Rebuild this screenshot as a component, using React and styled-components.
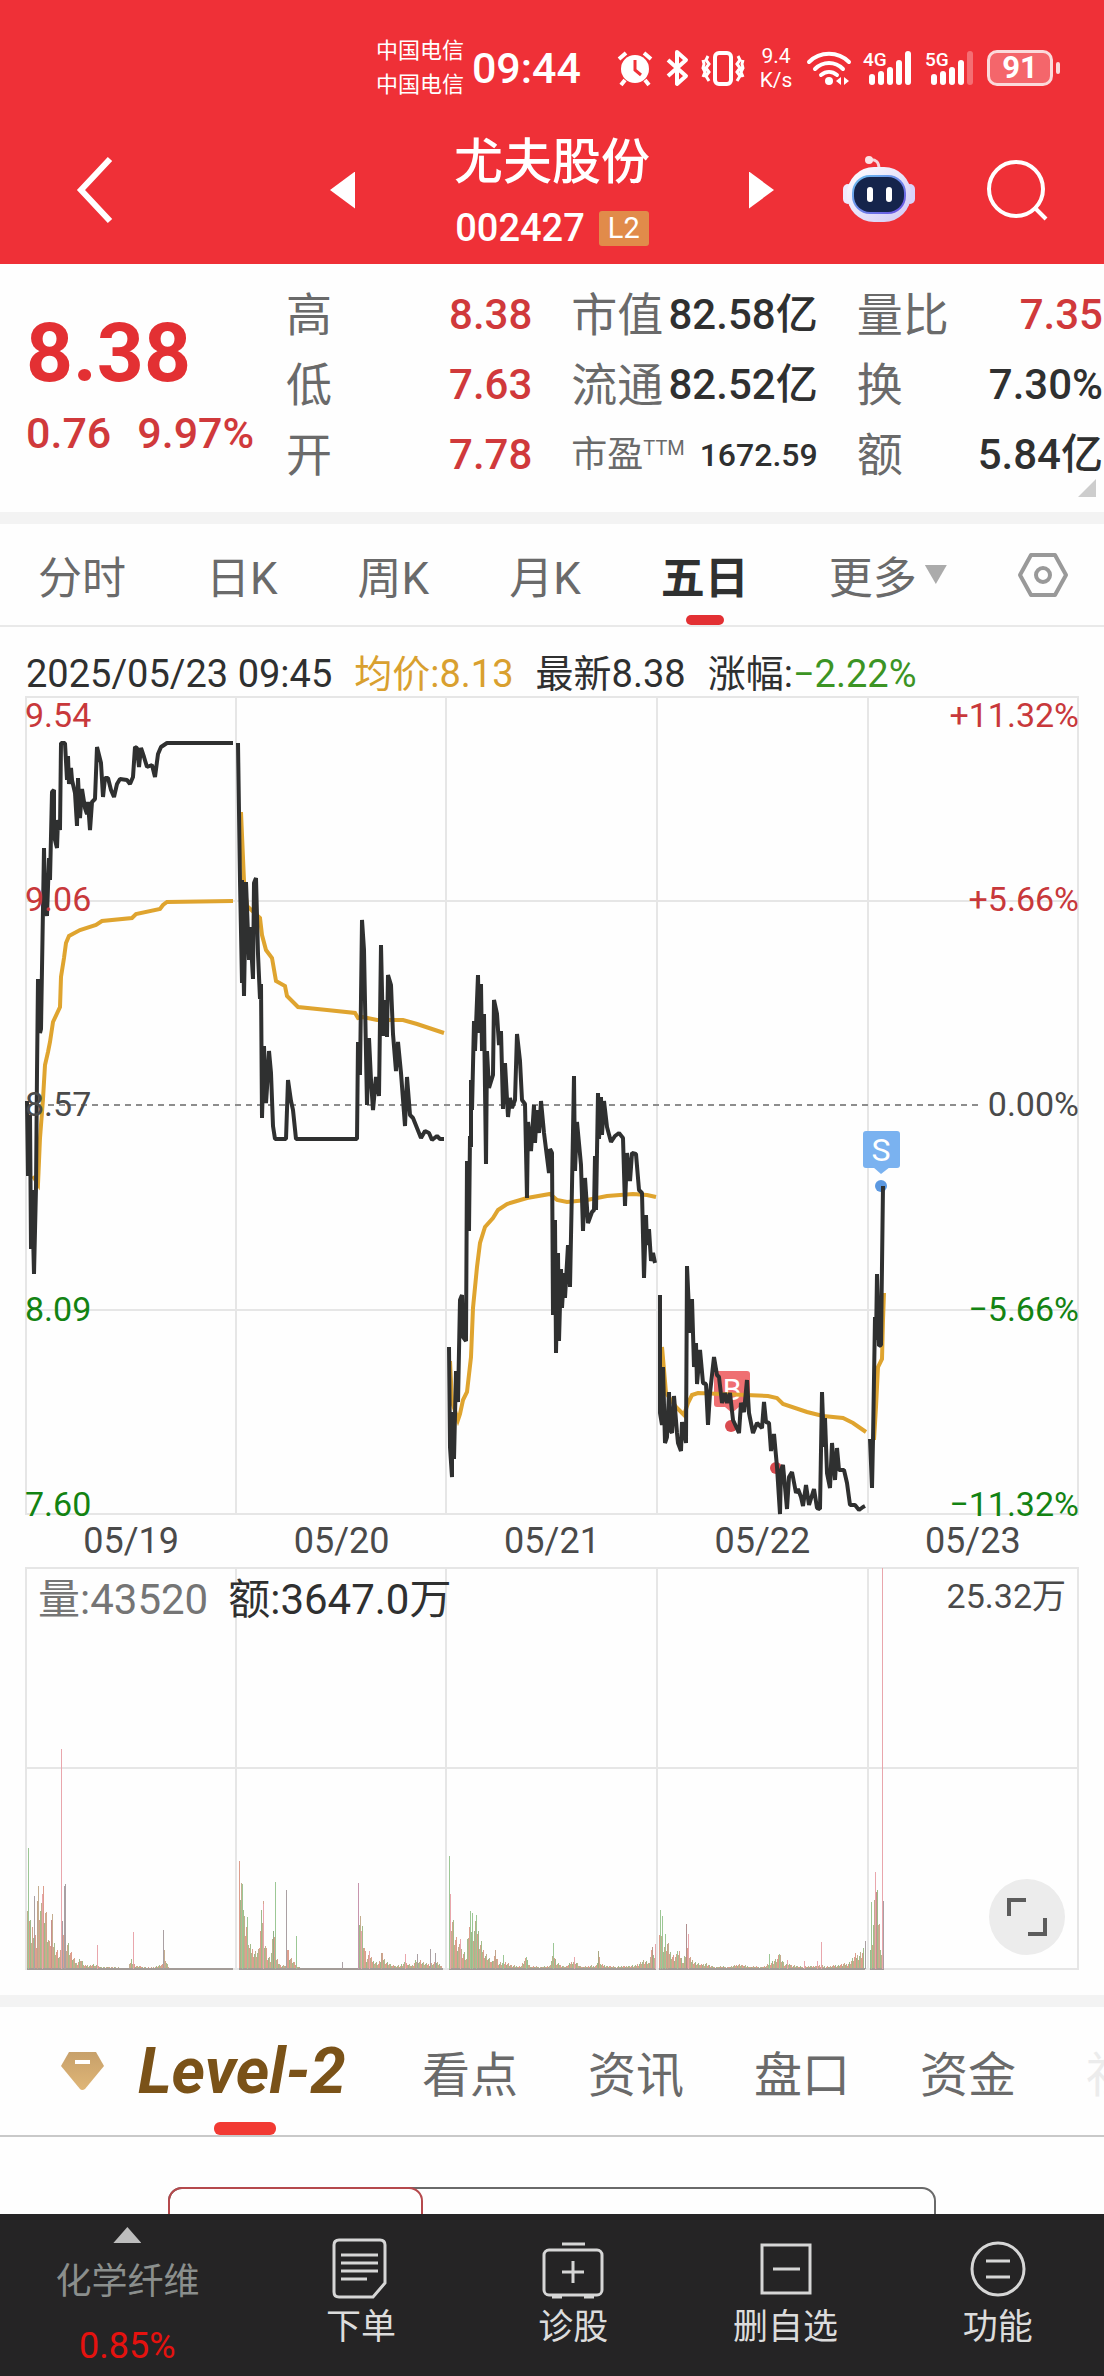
import { Fragment } from "react";
import styled, { createGlobalStyle } from "styled-components";

const GlobalStyle = createGlobalStyle`
  * {
    box-sizing: border-box;
  }
  body {
    margin: 0;
    background: #fefefe;
    color: #2f3030;
    font-family: Roboto, "Noto Sans CJK SC", sans-serif;
  }
  button {
    border: 0;
    padding: 0;
    background: none;
    color: inherit;
    font: inherit;
    white-space: nowrap;
    cursor: pointer;
  }
  svg {
    display: block;
    flex: none;
    overflow: visible;
  }
`;

/* ---------- data ---------- */

const stats = [
  [
    { label: "高", value: "8.38", up: true },
    { label: "低", value: "7.63", up: true },
    { label: "开", value: "7.78", up: true },
  ],
  [
    { label: "市值", value: "82.58亿" },
    { label: "流通", value: "82.52亿" },
    { label: "市盈", sup: "TTM", value: "1672.59", small: true },
  ],
  [
    { label: "量比", value: "7.35", up: true },
    { label: "换", value: "7.30%" },
    { label: "额", value: "5.84亿" },
  ],
];

const periods = ["分时", "日K", "周K", "月K", "五日"];
const days = ["05/19", "05/20", "05/21", "05/22", "05/23"];
const infoTabs = ["看点", "资讯", "盘口", "资金"];

// one polyline per trading day
const priceLines = [
  "27,411 28,486 30,425 31,559 32,500 34,584 36,498 37,383 38,289 40,343 41,339 44,158 45,214 47,226 49,168 50,190 52,102 54,100 54,146 57,158 58,130 60,140 61,53 65,53 67,90 68,66 69,94 71,78 72,90 75,103 77,136 78,88 80,128 82,99 85,118 87,124 88,112 90,140 92,112 95,109 97,57 101,73 103,107 105,88 108,88 111,100 114,107 117,94 120,89 127,90 130,94 133,87 135,57 137,58 139,77 141,58 144,67 147,77 152,75 155,87 158,64 161,57 164,55 167,53 233,53",
  "238,53 240,191 242,293 242,190 244,306 246,192 249,270 250,237 253,289 254,193 256,188 258,264 260,309 261,294 262,428 264,356 266,413 267,398 269,361 271,383 273,436 275,449 286,449 288,390 291,411 293,420 296,449 357,449 358,352 360,385 362,230 364,260 367,415 369,348 371,390 373,420 376,387 379,406 381,255 383,346 385,310 387,347 388,285 391,295 393,344 396,381 398,352 401,383 405,436 407,387 410,425 413,428 417,438 421,448 425,441 429,443 432,450 437,446 440,449 444,449",
  "449,657 450,757 452,787 452,722 454,769 456,681 458,712 460,610 462,605 463,647 466,651 467,471 469,541 470,446 471,457 471,390 472,420 474,331 475,361 478,285 479,343 481,294 482,361 484,324 486,474 487,361 489,398 493,385 494,310 497,324 499,355 501,341 503,419 505,373 508,427 510,408 512,418 515,410 517,344 520,371 522,410 525,414 527,508 528,432 531,461 534,415 535,453 537,420 539,443 541,411 544,443 549,483 550,459 552,463 553,625 555,530 556,663 558,563 559,651 561,579 562,618 564,583 565,608 568,555 570,597 572,496 574,386 575,481 577,432 581,475 583,541 585,488 588,533 592,522 594,520 595,466 596,520 598,403 599,449 601,407 602,445 604,411 607,437 611,452 615,446 619,443 623,448 625,516 627,463 630,491 632,463 636,464 639,500 642,503 644,588 646,525 647,555 649,539 651,571 653,563 655,573",
  "660,605 660,723 662,735 663,677 665,753 667,747 669,702 670,740 672,743 674,706 677,743 678,753 681,761 682,732 686,753 687,576 690,643 692,609 694,677 696,653 697,694 700,660 703,693 706,694 708,735 710,703 714,667 717,685 719,687 722,713 725,703 727,713 730,703 733,730 739,743 741,713 744,722 747,690 749,723 753,743 757,733 762,738 764,712 766,732 769,733 771,761 774,744 777,777 780,824 781,780 783,775 787,819 789,787 792,782 796,803 798,799 801,807 803,816 806,795 809,815 814,799 817,818 820,819 822,702 824,757 825,728 827,783 830,798 832,753 835,790 837,758 839,780 844,780 847,793 850,815 855,815 859,820 863,817 865,816",
  "870,749 872,798 873,750 875,627 876,650 877,584 879,656 881,655 883,496",
];

const averageLines = [
  "33,486 38,494 40,448 43,409 45,375 48,362 50,352 53,332 60,317 61,287 64,268 66,253 69,246 80,240 96,235 102,231 132,228 136,224 160,219 163,215 167,212 233,211",
  "241,122 244,191 247,216 260,228 262,245 266,260 272,268 276,291 285,296 287,306 298,317 327,320 355,323 358,328 363,327 377,330 403,330 417,334 444,343",
  "450,671 452,712 458,730 460,724 463,710 467,702 471,667 473,618 477,577 480,553 485,537 493,528 498,520 507,514 527,508 550,504 557,510 567,512 587,510 607,506 633,504 647,505 656,507",
  "662,657 666,703 676,717 684,725 688,713 692,705 698,703 768,706 777,708 783,714 807,722 823,726 843,728 853,733 866,742",
  "874,750 876,717 878,677 882,669 883,630 884,603",
];

const priceLabels = [
  { y: 37, price: "9.54", pct: "+11.32%", fill: "#c8383b" },
  { y: 221, price: "9.06", pct: "+5.66%", fill: "#c8383b" },
  { y: 426, price: "8.57", pct: "0.00%", fill: "#4a4a4a" },
  { y: 631, price: "8.09", pct: "−5.66%", fill: "#138313" },
  { y: 826, price: "7.60", pct: "−11.32%", fill: "#138313" },
];

// [x, height] outline of the minute volumes
const volumeShape = [
  [[27, 46], [29, 45], [31, 30], [33, 45], [34, 30], [36, 28], [38, 66], [40, 55], [42, 45], [43, 74], [45, 60], [47, 36], [49, 22], [52, 42], [53, 25], [56, 18], [59, 12], [63, 26], [67, 26], [69, 18], [72, 11], [76, 5], [80, 10], [84, 3], [92, 4], [100, 2], [128, 1], [131, 9], [135, 3], [150, 1], [158, 3], [162, 4], [164, 17], [166, 6], [169, 1], [232, 1]],
  [[239, 82], [241, 76], [242, 80], [244, 45], [247, 40], [249, 20], [252, 18], [255, 15], [258, 16], [261, 45], [263, 60], [264, 30], [267, 12], [270, 8], [273, 30], [274, 28], [276, 10], [280, 3], [285, 3], [286, 25], [289, 12], [292, 7], [296, 4], [300, 1], [357, 1], [359, 41], [362, 38], [364, 22], [366, 9], [369, 12], [372, 8], [378, 5], [382, 12], [386, 6], [392, 3], [400, 3], [405, 6], [412, 3], [417, 9], [422, 6], [428, 4], [436, 6], [442, 3]],
  [[449, 66], [452, 50], [454, 32], [457, 22], [460, 18], [463, 16], [466, 10], [468, 38], [471, 42], [476, 40], [479, 25], [483, 17], [488, 10], [492, 6], [495, 14], [498, 5], [505, 6], [512, 3], [520, 2], [526, 10], [530, 2], [545, 2], [549, 3], [553, 14], [556, 5], [565, 2], [574, 8], [580, 2], [596, 3], [598, 12], [601, 4], [612, 2], [635, 3], [643, 7], [648, 5], [652, 20], [655, 3]],
  [[659, 30], [661, 35], [663, 22], [667, 22], [670, 15], [674, 11], [679, 14], [683, 6], [686, 20], [689, 10], [693, 7], [700, 4], [706, 5], [712, 2], [730, 2], [738, 4], [750, 2], [765, 2], [769, 5], [775, 8], [780, 12], [784, 4], [790, 4], [800, 2], [820, 3], [826, 2], [840, 4], [848, 5], [855, 12], [860, 14], [863, 17], [864, 8]],
  [[870, 20], [872, 32], [874, 55], [875, 77], [877, 60], [879, 40], [881, 15], [883, 25]],
];

const RED = "#e9a6ac";
const GREEN = "#9cc795";
const GREY = "#aaa0a3";

const volumeSpikes = [
  [28, 121, GREEN], [34, 73, GREY], [37, 68, "#c3a48c"], [42, 75, RED], [51, 49, "#c98f8c"], [61, 220, RED], [62, 48, GREY], [64, 83, GREY], [65, 85, GREY],
  [97, 24, RED], [133, 37, RED], [163, 39, GREY],
  [242, 85, GREEN], [247, 52, GREEN], [263, 65, RED], [273, 38, "#8fb088"], [275, 87, GREEN], [286, 79, GREY], [296, 33, GREEN], [342, 7, GREY],
  [358, 86, "#c795ae"], [361, 38, RED], [369, 18, RED], [381, 16, "#c3a48c"], [405, 15, RED], [417, 15, GREY], [430, 20, GREY], [435, 16, GREY],
  [449, 113, GREEN], [450, 75, RED], [460, 30, RED], [470, 58, GREEN], [472, 56, GREEN], [476, 54, GREEN], [495, 19, "#c3a48c"], [503, 14, GREEN],
  [526, 12, GREEN], [553, 26, GREEN], [574, 12, RED], [598, 18, "#a9a77f"], [652, 22, "#b7988a"], [655, 25, RED],
  [660, 59, GREEN], [662, 53, GREEN], [665, 35, GREEN], [667, 25, "#c3a48c"], [677, 18, GREEN], [686, 45, "#b08f8f"], [688, 35, RED],
  [769, 15, GREEN], [779, 15, GREEN], [787, 9, RED], [804, 8, RED], [817, 8, RED], [821, 27, RED], [865, 28, GREY],
  [871, 67, GREEN], [875, 97, RED], [876, 77, "#c98f8c"], [882, 401, RED], [883, 68, GREY],
];

const barColors = ["#dea08f", "#bdb08c", "#a3bd8c", "#d3a48d", "#c5ae90", "#9dbb8a", "#dd9d8c"];

function buildBars(shape) {
  const bars = [];
  for (let i = 0; i < shape.length - 1; i++) {
    const [x1, h1] = shape[i];
    const [x2, h2] = shape[i + 1];
    for (let x = x1; x < x2; x++) {
      const base = h1 + ((h2 - h1) * (x - x1)) / (x2 - x1);
      const wobble = 1 + (((x * 37) % 11) - 5) / 16;
      const h = Math.max(1, Math.round(base * wobble));
      bars.push({ x, h, fill: h < 2 ? "#a9a19d" : barColors[(x * 13) % 7] });
    }
  }
  return bars;
}

/* ---------- icons ---------- */

const AlarmIcon = () => (
  <svg width="36" height="36" viewBox="0 0 36 36" fill="none" stroke="#fff" strokeWidth="4">
    <circle cx="18" cy="19" r="14" fill="#fff" stroke="none" />
    <path d="M2 9l7-6M34 9l-7-6M8 30l-4 5M28 30l4 5" />
    <path d="M18 10v10l6 5" stroke="#ef3037" strokeWidth="3" />
  </svg>
);

const BluetoothIcon = () => (
  <svg width="24" height="36" viewBox="0 0 24 36" fill="none" stroke="#fff" strokeWidth="4">
    <path d="M3 10l18 16-9 8V2l9 8L3 26" strokeLinejoin="round" />
  </svg>
);

const VibrateIcon = () => (
  <svg width="44" height="36" viewBox="0 0 44 36" fill="none" stroke="#fff" strokeWidth="4">
    <rect x="14" y="3" width="16" height="31" rx="4" />
    <path d="M7 6l-2 4 3 4-3 4 3 4-3 4 3 5M2 10l1 4-1 4 2 4-2 5M37 6l2 4-3 4 3 4-3 4 3 4-3 5M42 10l-1 4 1 4-2 4 2 5" strokeWidth="3" />
  </svg>
);

const WifiIcon = () => (
  <svg width="44" height="36" viewBox="0 0 44 36" fill="none" stroke="#fff" strokeWidth="4" strokeLinecap="round">
    <path d="M2 12c11-11 29-11 40 0M8 19c8-8 20-8 28 0M14 25c5-4 11-4 16 0" />
    <circle cx="22" cy="31" r="4" fill="#fff" stroke="none" />
    <path d="M34 27v8l-5-4zM37 27v8l5-4z" fill="#fff" stroke="none" />
  </svg>
);

const SignalIcon = ({ name, level }) => (
  <svg width="50" height="36" viewBox="0 0 50 36">
    <text x="0" y="16" fontSize="19" fontWeight="500" fill="#fff">{name}</text>
    {[11, 14, 18, 25, 34].map((h, i) => (
      <rect key={h} x={6 + i * 9} y={35 - h} width="6" height={h} rx="3" fill="#fff" opacity={i < level ? 1 : 0.3} />
    ))}
  </svg>
);

const BackIcon = () => (
  <svg width="36" height="66" viewBox="0 0 36 66" fill="none" stroke="#fff" strokeWidth="6">
    <path d="M33 2L4 33l29 31" />
  </svg>
);

const RobotIcon = () => (
  <svg width="72" height="68" viewBox="0 0 72 68">
    <defs>
      <linearGradient id="shell" x1="0" y1="0" x2="1" y2="1">
        <stop offset="0" stopColor="#fff" />
        <stop offset="1" stopColor="#cfc8f5" />
      </linearGradient>
      <linearGradient id="rim" x1="0" y1="0" x2="1" y2="1">
        <stop offset="0" stopColor="#6cc4f0" />
        <stop offset="1" stopColor="#6a4be0" />
      </linearGradient>
    </defs>
    <path d="M26 4c7-1 10 2 10 9" fill="none" stroke="#f6d5dc" strokeWidth="3" />
    <circle cx="26" cy="4" r="4" fill="#fbe3e6" />
    <rect x="0" y="28" width="10" height="20" rx="5" fill="#efeafd" />
    <rect x="62" y="28" width="10" height="20" rx="5" fill="#d9d2fa" />
    <rect x="4" y="11" width="64" height="55" rx="27" fill="url(#shell)" />
    <rect x="9" y="19" width="54" height="39" rx="18" fill="url(#rim)" />
    <rect x="11" y="21" width="50" height="35" rx="16" fill="#15244b" />
    <rect x="24" y="31" width="6" height="15" rx="3" fill="#fff" />
    <rect x="43" y="31" width="6" height="15" rx="3" fill="#fff" />
  </svg>
);

const SearchIcon = () => (
  <svg width="60" height="60" viewBox="0 0 60 60" fill="none" stroke="#fff" strokeWidth="4">
    <circle cx="29" cy="29" r="27" />
    <path d="M47 47l12 12" />
  </svg>
);

const HexIcon = () => (
  <svg width="50" height="46" viewBox="0 0 50 46" fill="none" stroke="#999" strokeWidth="4" strokeLinejoin="round">
    <path d="M13 3h24l11 20-11 20H13L2 23z" />
    <circle cx="25" cy="23" r="7" />
  </svg>
);

const ExpandIcon = () => (
  <svg width="40" height="40" viewBox="0 0 40 40" fill="none" stroke="#5c5c5c" strokeWidth="4">
    <path d="M2 19V3h17M38 21v16H21" />
  </svg>
);

const DiamondIcon = () => (
  <svg width="43" height="38" viewBox="0 0 43 38">
    <defs>
      <linearGradient id="gold" x1="0" y1="0" x2="0" y2="1">
        <stop offset="0" stopColor="#c7a06a" />
        <stop offset="1" stopColor="#dfb677" />
      </linearGradient>
    </defs>
    <path d="M8 0h27l8 14L24 37q-3 2-5 0L0 14z" fill="url(#gold)" />
    <path d="M14 10h15" stroke="#fff" strokeWidth="4" />
  </svg>
);

const navIcons = {
  order: (
    <>
      <path d="M9 2h41q5 0 5 5v38L43 59H9q-5 0-5-5V7q0-5 5-5z" />
      <path d="M11 17h37M11 25h37M11 33h37M11 41h26" />
    </>
  ),
  diagnose: (
    <>
      <rect x="2" y="12" width="58" height="45" rx="5" />
      <path d="M20 6h23M31 23v22M20 34h22M10 59h10M42 59h10" />
    </>
  ),
  remove: (
    <>
      <rect x="7" y="7" width="48" height="48" />
      <path d="M18 31h27" />
    </>
  ),
  more: (
    <>
      <circle cx="31" cy="31" r="26" />
      <path d="M19 23h24M19 39h24" />
    </>
  ),
};

const navItems = [
  { key: "order", label: "下单" },
  { key: "diagnose", label: "诊股" },
  { key: "remove", label: "删自选" },
  { key: "more", label: "功能" },
];

/* ---------- charts ---------- */

function PriceChart() {
  return (
    <Chart viewBox="0 0 1104 828" role="img" aria-label="五日走势">
      <g stroke="#e6e6e6" strokeWidth="2" fill="none">
        <rect x="26" y="7" width="1052" height="817" />
        <path d="M236 7v817M446 7v817M657 7v817M868 7v817M26 211h1052M26 620h1052" />
      </g>
      <path d="M26 415h952" stroke="#8d8d8d" strokeWidth="2" strokeDasharray="6 5" />

      <g fill="#ef6f72">
        <rect x="714" y="681" width="36" height="36" rx="3" />
        <path d="M725 717h14l-7 6z" />
      </g>
      <text x="732" y="710" fontSize="30" fill="#fff" textAnchor="middle">B</text>
      <g fill="#d94b50">
        <circle cx="731" cy="736" r="6" />
        <circle cx="776" cy="778" r="6" />
      </g>
      <g fill="#7ab2f0">
        <rect x="863" y="441" width="37" height="37" rx="3" />
        <path d="M873 477h17l-9 7z" />
      </g>
      <text x="881" y="471" fontSize="32" fill="#fff" textAnchor="middle">S</text>
      <circle cx="881" cy="496" r="6" fill="#5b98e0" />

      {averageLines.map((points) => (
        <polyline key={points} points={points} fill="none" stroke="#dfa42f" strokeWidth="4" />
      ))}
      {priceLines.map((points) => (
        <polyline key={points} points={points} fill="none" stroke="#2f3030" strokeWidth="4" strokeLinejoin="bevel" />
      ))}

      {priceLabels.map((row) => (
        <Fragment key={row.price}>
          <text x="25" y={row.y} fontSize="34" fill={row.fill}>{row.price}</text>
          <text x="1079" y={row.y} fontSize="34" fill={row.fill} textAnchor="end">{row.pct}</text>
        </Fragment>
      ))}
    </Chart>
  );
}

function VolumeChart() {
  return (
    <Chart viewBox="0 0 1104 410" role="img" aria-label="成交量" shapeRendering="crispEdges">
      <g stroke="#e6e6e6" strokeWidth="2" fill="none">
        <rect x="26" y="4" width="1052" height="401" />
        <path d="M236 4v401M446 4v401M657 4v401M868 4v401M26 204h1052" />
      </g>
      {volumeShape.map((shape) => (
        <g key={shape[0][0]}>
          {buildBars(shape).map((bar) => (
            <rect key={bar.x} x={bar.x} y={405 - bar.h} width="1" height={bar.h} fill={bar.fill} />
          ))}
          <rect x={shape[0][0]} y="404" width={shape[shape.length - 1][0] - shape[0][0] + 1} height="2" fill="#a39c98" />
        </g>
      ))}
      {volumeSpikes.map(([x, h, fill]) => (
        <rect key={x} x={x} y={405 - h} width="1" height={h} fill={fill} />
      ))}
    </Chart>
  );
}

function App() {
  return (
    <Page>
      <GlobalStyle />
      <Header>
        <StatusBar>
          <Carriers>
            <span>中国电信</span>
            <span>中国电信</span>
          </Carriers>
          <Clock>09:44</Clock>
          <AlarmIcon />
          <BluetoothIcon />
          <VibrateIcon />
          <Speed>
            <span>9.4</span>
            <span>K/s</span>
          </Speed>
          <WifiIcon />
          <SignalIcon name="4G" level={5} />
          <SignalIcon name="5G" level={4} />
          <Battery>91</Battery>
        </StatusBar>
        <TitleBar>
          <BackButton aria-label="返回">
            <BackIcon />
          </BackButton>
          <Switcher>
            <button aria-label="上一只">
              <Arrow $dir="left" />
            </button>
            <Stock>
              <StockName>尤夫股份</StockName>
              <StockCode>
                002427 <Badge>L2</Badge>
              </StockCode>
            </Stock>
            <button aria-label="下一只">
              <Arrow $dir="right" />
            </button>
          </Switcher>
          <Actions>
            <button aria-label="智能助手">
              <RobotIcon />
            </button>
            <button aria-label="搜索">
              <SearchIcon />
            </button>
          </Actions>
        </TitleBar>
      </Header>

      <Quote>
        <div>
          <Price>8.38</Price>
          <Change>
            <span>0.76</span>
            <span>9.97%</span>
          </Change>
        </div>
        {stats.map((column) => (
          <StatColumn key={column[0].label}>
            {column.map((item) => (
              <Stat key={item.label}>
                <StatLabel $small={item.small}>
                  {item.label}
                  {item.sup && <Sup>{item.sup}</Sup>}
                </StatLabel>
                <StatValue $small={item.small} $up={item.up}>{item.value}</StatValue>
              </Stat>
            ))}
          </StatColumn>
        ))}
        <Corner />
      </Quote>
      <Divider />

      <PeriodBar>
        <PeriodTabs>
          {periods.map((name) => (
            <PeriodTab key={name} $active={name === "五日"}>{name}</PeriodTab>
          ))}
          <PeriodTab>
            更多
            <Caret />
          </PeriodTab>
        </PeriodTabs>
        <button aria-label="设置">
          <HexIcon />
        </button>
      </PeriodBar>

      <InfoLine>
        <span>2025/05/23 09:45</span>
        <Tint $color="#d9a02f">均价:8.13</Tint>
        <span>最新8.38</span>
        <span>
          涨幅:<Tint $color="#3c9424">−2.22%</Tint>
        </span>
      </InfoLine>
      <PriceChart />
      <Dates>
        {days.map((day) => (
          <span key={day}>{day}</span>
        ))}
      </Dates>
      <VolumePanel>
        <VolumeChart />
        <VolumeCaption>
          <Tint $color="#757575">量:43520</Tint>
          <span>额:3647.0万</span>
          <VolumeMax>25.32万</VolumeMax>
        </VolumeCaption>
        <ExpandButton aria-label="全屏">
          <ExpandIcon />
        </ExpandButton>
      </VolumePanel>
      <Divider />

      <InfoTabs>
        <LevelTab>
          <DiamondIcon />
          <LevelName>Level-2</LevelName>
        </LevelTab>
        {infoTabs.map((name) => (
          <InfoTab key={name}>{name}</InfoTab>
        ))}
        <InfoTab $faded>社区</InfoTab>
      </InfoTabs>
      <Panel>
        <Segments>
          <Segment />
        </Segments>
      </Panel>

      <BottomNav>
        <Sector>
          <Arrow $dir="up" />
          <SectorName>化学纤维</SectorName>
          <SectorChange>0.85%</SectorChange>
        </Sector>
        {navItems.map((item) => (
          <NavItem key={item.key}>
            <svg width="62" height="62" viewBox="0 0 62 62" fill="none" stroke="#d6d6d6" strokeWidth="3">
              {navIcons[item.key]}
            </svg>
            {item.label}
          </NavItem>
        ))}
      </BottomNav>
    </Page>
  );
}

/* ---------- styles ---------- */

const Page = styled.div`
  overflow-x: hidden;
`;

const Header = styled.header`
  padding-top: 44px;
  background: #ef3037;
  color: #fff;
`;

const StatusBar = styled.div`
  display: flex;
  justify-content: flex-end;
  align-items: center;
  gap: 12px;
  height: 48px;
  padding-right: 44px;
`;

const Carriers = styled.div`
  display: flex;
  flex-direction: column;
  font-size: 22px;
  line-height: 34px;
`;

const Clock = styled.time`
  margin: 0 24px 0 -4px;
  font-size: 43px;
  font-weight: 500;
`;

const Speed = styled.div`
  display: flex;
  flex-direction: column;
  align-items: center;
  width: 38px;
  font-size: 21px;
  line-height: 24px;
`;

const Battery = styled.div`
  position: relative;
  width: 66px;
  height: 36px;
  margin-right: 7px;
  border: 3px solid #fbdadb;
  border-radius: 10px;
  background: #f4666b;
  font-size: 31px;
  font-weight: 700;
  line-height: 30px;
  text-align: center;
  &::after {
    content: "";
    position: absolute;
    top: 9px;
    right: -10px;
    width: 4px;
    height: 12px;
    border-radius: 2px;
    background: #fbdadb;
  }
`;

const TitleBar = styled.div`
  display: grid;
  grid-template-columns: 1fr 444px 1fr;
  align-items: center;
  height: 172px;
  padding: 24px 57px 0 77px;
`;

const BackButton = styled.button`
  justify-self: start;
`;

const Switcher = styled.div`
  display: flex;
  justify-content: space-between;
  align-items: center;
  margin: 0 -10px 0 -10px;
  padding: 0 20px 0 0;
`;

const arrows = {
  left: "polygon(100% 0, 100% 100%, 0 50%)",
  right: "polygon(0 0, 100% 50%, 0 100%)",
  up: "polygon(50% 0, 100% 100%, 0 100%)",
};

const Arrow = styled.span`
  display: block;
  width: ${({ $dir }) => ($dir === "up" ? "28px" : "25px")};
  height: ${({ $dir }) => ($dir === "up" ? "16px" : "37px")};
  background: ${({ $dir }) => ($dir === "up" ? "#bdbdbd" : "#fff")};
  clip-path: ${({ $dir }) => arrows[$dir]};
`;

const Stock = styled.div`
  text-align: center;
`;

const StockName = styled.h1`
  margin: 0;
  font-size: 49px;
  font-weight: 500;
  line-height: 76px;
`;

const StockCode = styled.div`
  display: flex;
  justify-content: center;
  align-items: center;
  gap: 14px;
  font-size: 38px;
  font-weight: 500;
  line-height: 54px;
`;

const Badge = styled.span`
  width: 50px;
  border-radius: 3px;
  background: #e18b4a;
  font-size: 29px;
  font-weight: 400;
  line-height: 35px;
`;

const Actions = styled.div`
  display: flex;
  justify-content: flex-end;
  align-items: center;
  gap: 72px;
`;

const Quote = styled.section`
  position: relative;
  display: grid;
  grid-template-columns: 221px 1fr 1fr 1fr;
  gap: 39px;
  padding: 16px 1px 22px 26px;
`;

const Price = styled.div`
  padding-top: 24px;
  color: #e33033;
  font-size: 82px;
  font-weight: 700;
  line-height: 98px;
`;

const Change = styled.div`
  display: flex;
  gap: 26px;
  color: #d0393b;
  font-size: 43px;
  font-weight: 500;
  line-height: 62px;
`;

const StatColumn = styled.dl`
  margin: 0;
`;

const Stat = styled.div`
  display: flex;
  justify-content: space-between;
  line-height: 70px;
  white-space: nowrap;
`;

const StatLabel = styled.dt`
  display: flex;
  color: #6a6a6a;
  font-size: ${({ $small }) => ($small ? "36px" : "46px")};
`;

const Sup = styled.span`
  font-size: 20px;
  line-height: 56px;
`;

const StatValue = styled.dd`
  margin: 0;
  color: ${({ $up }) => ($up ? "#d0393b" : "#2f3030")};
  font-size: ${({ $small }) => ($small ? "32px" : "42px")};
  font-weight: 500;
`;

const Corner = styled.span`
  position: absolute;
  right: 8px;
  bottom: 15px;
  width: 18px;
  height: 18px;
  background: #cdcdcd;
  clip-path: polygon(100% 0, 100% 100%, 0 100%);
`;

const Divider = styled.div`
  height: 12px;
  background: #f3f3f3;
`;

const PeriodBar = styled.nav`
  display: flex;
  justify-content: space-between;
  height: 103px;
  padding: 0 36px 0 38px;
  border-bottom: 2px solid #e9e9e9;
`;

const PeriodTabs = styled.div`
  display: flex;
  gap: 80px;
`;

const PeriodTab = styled.button`
  position: relative;
  display: flex;
  align-items: center;
  color: ${({ $active }) => ($active ? "#2f3030" : "#6a6a6a")};
  font-size: 44px;
  font-weight: ${({ $active }) => ($active ? 700 : 400)};
  &::after {
    content: "";
    display: ${({ $active }) => ($active ? "block" : "none")};
    position: absolute;
    bottom: 0;
    left: calc(50% - 19px);
    width: 38px;
    height: 10px;
    border-radius: 5px;
    background: #e33033;
  }
`;

const Caret = styled.span`
  width: 22px;
  height: 19px;
  margin-left: 8px;
  background: #ababab;
  clip-path: polygon(0 0, 100% 0, 50% 100%);
`;

const InfoLine = styled.div`
  display: flex;
  gap: 22px;
  padding: 31px 26px 0;
  font-size: 38px;
  line-height: 32px;
  white-space: nowrap;
`;

const Tint = styled.span`
  color: ${({ $color }) => $color};
`;

const Chart = styled.svg`
  width: 100%;
  height: auto;
`;

const Dates = styled.div`
  display: grid;
  grid-template-columns: repeat(5, 1fr);
  padding: 0 26px;
  color: #4a4a4a;
  font-size: 36px;
  line-height: 46px;
  text-align: center;
`;

const VolumePanel = styled.section`
  position: relative;
  margin-bottom: 21px;
`;

const VolumeCaption = styled.div`
  position: absolute;
  top: 12px;
  left: 38px;
  right: 38px;
  display: flex;
  gap: 20px;
  font-size: 42px;
  line-height: 48px;
`;

const VolumeMax = styled.span`
  margin-left: auto;
  color: #4a4a4a;
  font-size: 34px;
  line-height: 40px;
`;

const ExpandButton = styled.button`
  position: absolute;
  right: 39px;
  bottom: 19px;
  display: grid;
  place-items: center;
  width: 76px;
  height: 76px;
  border-radius: 50%;
  background: #ececec;
`;

const InfoTabs = styled.nav`
  display: flex;
  gap: 70px;
  height: 130px;
  padding-left: 61px;
  border-bottom: 2px solid #c9c9c9;
  overflow: hidden;
  white-space: nowrap;
`;

const InfoTab = styled.button`
  flex: none;
  color: ${({ $faded }) => ($faded ? "#ececec" : "#6a6a6a")};
  font-size: 48px;
`;

const LevelTab = styled(InfoTab)`
  display: flex;
  align-items: center;
  gap: 34px;
`;

const LevelName = styled.span`
  position: relative;
  display: flex;
  align-items: center;
  align-self: stretch;
  width: 214px;
  color: #7a5218;
  font-size: 64px;
  font-style: italic;
  font-weight: 700;
  &::after {
    content: "";
    position: absolute;
    bottom: 0;
    left: calc(50% - 31px);
    width: 62px;
    height: 13px;
    border-radius: 6px;
    background: #f23a33;
  }
`;

const Panel = styled.section`
  height: 77px;
  padding: 50px 168px 0;
  overflow: hidden;
`;

const Segments = styled.div`
  height: 80px;
  border: 2px solid #6a6a6a;
  border-radius: 14px;
`;

const Segment = styled.div`
  width: calc(100% / 3);
  height: 80px;
  margin: -2px;
  border: 2px solid #b5494c;
  border-radius: 14px;
`;

const BottomNav = styled.nav`
  display: grid;
  grid-template-columns: 6fr 5fr 5fr 5fr 5fr;
  height: 162px;
  background: #252425;
  color: #dcdcdc;
`;

const Sector = styled.button`
  display: flex;
  flex-direction: column;
  align-items: center;
  padding-top: 13px;
`;

const SectorName = styled.span`
  color: #8b8f8d;
  font-size: 36px;
  line-height: 78px;
`;

const SectorChange = styled.span`
  color: #e5120f;
  font-size: 36px;
  line-height: 50px;
`;

const NavItem = styled.button`
  display: flex;
  flex-direction: column;
  align-items: center;
  padding-top: 24px;
  font-size: 35px;
  line-height: 56px;
`;

export default App;
